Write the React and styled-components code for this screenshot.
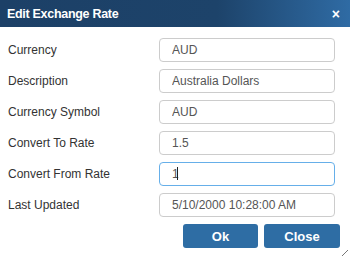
import React from "react";
import styled, { createGlobalStyle } from "styled-components";

const GlobalStyle = createGlobalStyle`
  html, body {
    margin: 0;
    padding: 0;
    background: #fff;
    font-family: "Liberation Sans", Arial, sans-serif;
  }
`;

const Dialog = styled.div`
  position: relative;
  width: 350px;
  height: 258px;
  display: flex;
  flex-direction: column;
  background: #fff;
  overflow: hidden;
`;

const TitleBar = styled.div`
  height: 27px;
  display: flex;
  align-items: center;
  justify-content: space-between;
  padding: 0 10px 0 7px;
  background: linear-gradient(90deg, #1c4067 0%, #1d436a 62%, #2f6ba4 100%);
  color: #fff;
`;

const Title = styled.span`
  font-size: 12.5px;
  font-weight: bold;
  letter-spacing: -0.3px;
`;

const CloseX = styled.span`
  font-size: 14px;
  font-weight: bold;
  line-height: 1;
`;

const Body = styled.div`
  padding: 11px 15px 0 8px;
  display: flex;
  flex-direction: column;
`;

const Form = styled.div`
  display: grid;
  grid-template-columns: 151px 176px;
  row-gap: 7px;
  align-items: center;
`;

const Label = styled.label`
  font-size: 12px;
  color: #333;
`;

const Field = styled.div`
  position: relative;
`;

const Input = styled.input`
  box-sizing: border-box;
  display: block;
  width: 176px;
  height: 24px;
  padding: 0 12px;
  border: 1px solid ${(p) => (p.$focused ? "#66afe9" : "#ccc")};
  border-radius: 4px;
  font-family: "Liberation Sans", Arial, sans-serif;
  font-size: 12px;
  color: #555;
  background: #fff;
  outline: none;
`;

const Caret = styled.span`
  position: absolute;
  left: 18px;
  top: 5px;
  width: 1px;
  height: 13px;
  background: #222;
`;

const Footer = styled.div`
  display: flex;
  justify-content: flex-end;
  gap: 6px;
  padding: 7px 10px 0 0;
`;

const Button = styled.button`
  box-sizing: border-box;
  width: ${(p) => p.$w}px;
  height: 24px;
  border: none;
  border-radius: 3px;
  background: #2e6da4;
  color: #fff;
  font-family: "Liberation Sans", Arial, sans-serif;
  font-size: 13px;
  font-weight: bold;
  padding: 0;
`;

const Grip = styled.svg`
  position: absolute;
  right: 2px;
  bottom: 2px;
`;

const fields = [
  { label: "Currency", value: "AUD" },
  { label: "Description", value: "Australia Dollars" },
  { label: "Currency Symbol", value: "AUD" },
  { label: "Convert To Rate", value: "1.5" },
  { label: "Convert From Rate", value: "1", focused: true },
  { label: "Last Updated", value: "5/10/2000 10:28:00 AM" },
];

const App = () => {
  return (
    <Dialog>
      <GlobalStyle />
      <TitleBar>
        <Title>Edit Exchange Rate</Title>
        <CloseX>×</CloseX>
      </TitleBar>
      <Body>
        <Form>
          {fields.map((f) => (
            <React.Fragment key={f.label}>
              <Label>{f.label}</Label>
              <Field>
                <Input readOnly value={f.value} $focused={f.focused} />
                {f.focused && <Caret />}
              </Field>
            </React.Fragment>
          ))}
        </Form>
      </Body>
      <Footer>
        <Button $w={75}>Ok</Button>
        <Button $w={76}>Close</Button>
      </Footer>
      <Grip width="6" height="6" viewBox="0 0 6 6">
        <path d="M0 6 L6 0" stroke="#777" strokeWidth="1" />
      </Grip>
    </Dialog>
  );
};

export default App;
